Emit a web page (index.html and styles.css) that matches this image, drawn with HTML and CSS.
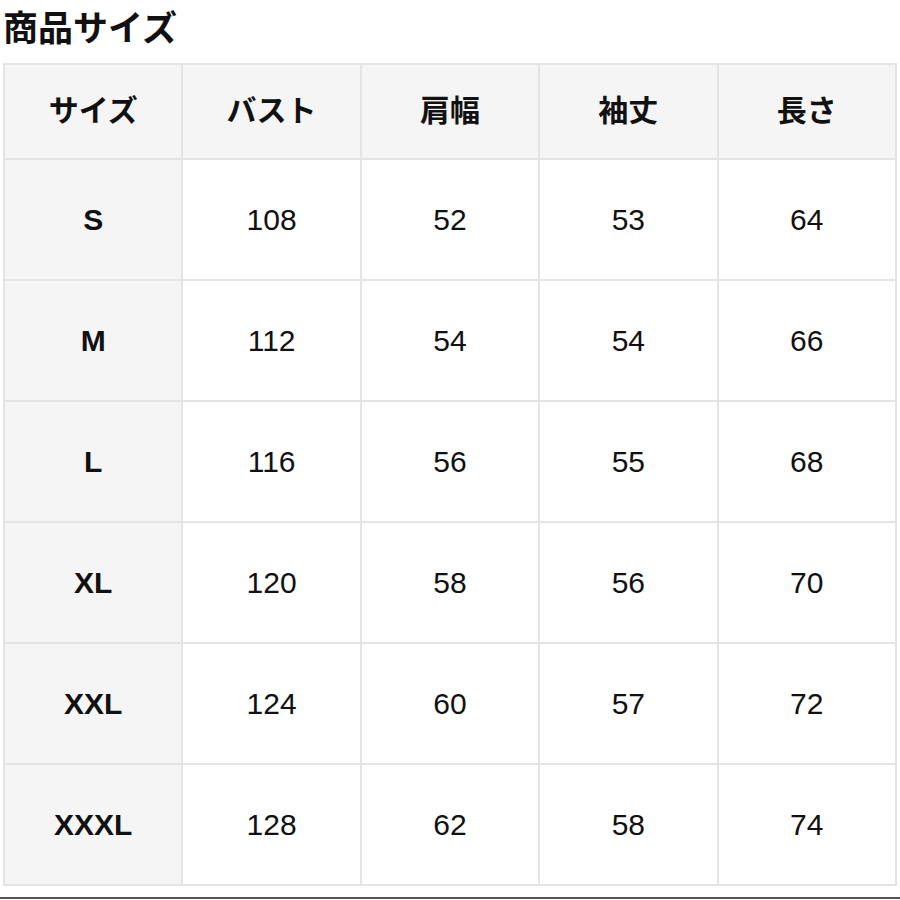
FILE: index.html
```html
<!DOCTYPE html>
<html lang="ja">
<head>
<meta charset="utf-8">
<link rel="stylesheet" href="styles.css">
</head>
<body>
<h1 class="title">商品サイズ</h1>
<table class="size-table">
  <thead>
    <tr><th>サイズ</th><th>バスト</th><th>肩幅</th><th>袖丈</th><th>長さ</th></tr>
  </thead>
  <tbody>
    <tr><th>S</th><td>108</td><td>52</td><td>53</td><td>64</td></tr>
    <tr><th>M</th><td>112</td><td>54</td><td>54</td><td>66</td></tr>
    <tr><th>L</th><td>116</td><td>56</td><td>55</td><td>68</td></tr>
    <tr><th>XL</th><td>120</td><td>58</td><td>56</td><td>70</td></tr>
    <tr><th>XXL</th><td>124</td><td>60</td><td>57</td><td>72</td></tr>
    <tr><th>XXXL</th><td>128</td><td>62</td><td>58</td><td>74</td></tr>
  </tbody>
</table>
<div class="bottom-rule"></div>
</body>
</html>
```
FILE: styles.css
```css
html, body {
  margin: 0;
  padding: 0;
  background: #ffffff;
}
body {
  font-family: "Liberation Sans", "Noto Sans CJK JP", sans-serif;
  color: #111111;
  width: 900px;
  height: 900px;
  overflow: hidden;
}
.title {
  margin: 0;
  padding-left: 3px;
  height: 63px;
  line-height: 52px;
  font-family: "Noto Sans CJK JP", sans-serif;
  font-size: 35px;
  font-weight: 700;
  color: #111111;
}
.size-table {
  margin-left: 3px;
  width: 894px;
  border-collapse: collapse;
  table-layout: fixed;
}
.size-table th,
.size-table td {
  border: 2px solid #e4e4e4;
  text-align: center;
  vertical-align: middle;
  padding: 0;
}
.size-table thead tr {
  height: 95px;
}
.size-table tbody tr {
  height: 121px;
}
.size-table thead th {
  background: #f5f5f5;
  font-family: "Noto Sans CJK JP", sans-serif;
  font-size: 30px;
  font-weight: 700;
  padding-bottom: 8px;
}
.size-table tbody th {
  background: #f5f5f5;
  font-size: 30px;
  font-weight: 700;
}
.size-table td {
  background: #ffffff;
  font-size: 30px;
  font-weight: 400;
}
.bottom-rule {
  margin-top: 11px;
  height: 2px;
  background: #555555;
}
```
